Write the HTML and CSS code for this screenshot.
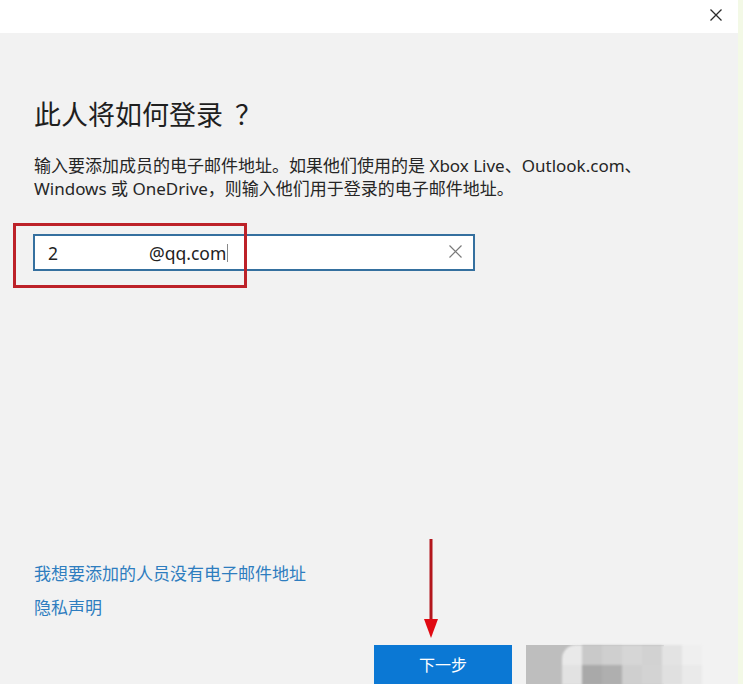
FILE: index.html
```html
<!DOCTYPE html>
<html lang="zh-CN">
<head>
  <meta charset="UTF-8">
  <meta name="viewport" content="width=device-width, initial-scale=1.0">
  <title>添加成员</title>
  <link rel="stylesheet" href="styles.css">
</head>
<body>

<div class="window">
  <header class="titlebar">
    <button class="close-btn" aria-label="关闭">
      <svg width="12" height="12" viewBox="0 0 12 12"><path d="M0.5 0.5 L11.5 11.5 M11.5 0.5 L0.5 11.5" stroke="#2b2b2b" stroke-width="1.3" fill="none"/></svg>
    </button>
  </header>

  <main class="dialog">
    <h1 class="dialog-title">此人将如何登录<span class="qmark">？</span></h1>
    <p class="dialog-text">输入要添加成员的电子邮件地址。如果他们使用的是 Xbox Live、Outlook.com、<br>Windows 或 OneDrive，则输入他们用于登录的电子邮件地址。</p>

    <!-- email field with the red annotation box -->
    <div class="field">
      <div class="email-input">
        <span>2</span><span class="email-hidden"></span><span>@qq.com</span><span class="caret"></span>
      </div>
      <svg class="clear-icon" width="13" height="13" viewBox="0 0 13 13"><path d="M0.5 0.5 L12.5 12.5 M12.5 0.5 L0.5 12.5" stroke="#7a7a7a" stroke-width="1.2" fill="none"/></svg>
      <div class="highlight-box"></div>
    </div>

    <div class="dialog-footer">
      <a class="link" href="#">我想要添加的人员没有电子邮件地址</a>
      <a class="link" href="#">隐私声明</a>

      <div class="buttons">
        <svg class="arrow" width="16" height="100" viewBox="0 0 16 100">
          <line x1="8" y1="0" x2="8" y2="82" stroke="#b3161c" stroke-width="3"/>
          <polygon points="1,80 15,80 8,99" fill="#e00a12"/>
        </svg>
        <button class="btn-primary">下一步</button>
        <div class="btn-masked">
          <div class="mosaic">
            <span style="background:#e9e9e9"></span><span style="background:#c9c9c9"></span><span style="background:#cfcfcf"></span><span style="background:#d6d6d6"></span><span style="background:#d2d2d2"></span><span style="background:#e3e3e3"></span><span style="background:#efefef"></span>
            <span style="background:#e2e2e2"></span><span style="background:#a9a9a9"></span><span style="background:#afafaf"></span><span style="background:#cfcfcf"></span><span style="background:#d3d3d3"></span><span style="background:#e0e0e0"></span><span style="background:#eaeaea"></span>
          </div>
        </div>
      </div>
    </div>
  </main>
</div>

</body>
</html>
```

FILE: styles.css
```css
html, body {
  margin: 0;
  padding: 0;
}

body {
  font-family: "Noto Sans", "Noto Sans CJK SC", sans-serif;
  background-color: #f2f2f2;
  width: 743px;
  height: 684px;
  overflow: hidden;
}

.window {
  height: 684px;
  display: flex;
  flex-direction: column;
  border-right: 5px solid #f3f9e6;
  box-sizing: border-box;
}

.titlebar {
  height: 33px;
  background-color: #fff;
  display: flex;
  justify-content: flex-end;
  align-items: flex-start;
}

.close-btn {
  border: 0;
  background: none;
  padding: 0;
  margin: 9px 16px 0 0;
  width: 12px;
  height: 12px;
  line-height: 0;
}

.dialog {
  flex: 1;
  display: flex;
  flex-direction: column;
  padding: 0 0 0 34px;
}

.dialog-title {
  font-family: "Noto Sans CJK SC", sans-serif;
  font-size: 27px;
  font-weight: 400;
  line-height: 36px;
  color: #1f1f1f;
  margin: 63px 0 0 0;
}

.qmark {
  margin-left: 12px;
}

.dialog-text {
  font-size: 17px;
  line-height: 23px;
  color: #262626;
  margin: 22px 0 0 0;
  white-space: nowrap;
}

.field {
  position: relative;
  margin: 34px 0 0 -1px;
  width: 442px;
}

.email-input {
  height: 33px;
  border: 2px solid #35709f;
  background-color: #fff;
  display: flex;
  align-items: center;
  padding-left: 13px;
  font-size: 17.5px;
  color: #222;
}

.email-hidden {
  width: 91px;
}

.caret {
  width: 1px;
  height: 18px;
  background-color: #888;
  margin-left: 1px;
}

.clear-icon {
  position: absolute;
  right: 13px;
  top: 11px;
}

.highlight-box {
  position: absolute;
  left: -20px;
  top: -11px;
  width: 228px;
  height: 59px;
  border: 3px solid #bd2229;
}

.dialog-footer {
  margin-top: auto;
  display: flex;
  flex-direction: column;
}

.link {
  font-size: 17px;
  line-height: 23px;
  color: #2e7dbf;
  text-decoration: none;
  align-self: flex-start;
  margin-bottom: 11px;
}

.buttons {
  position: relative;
  display: flex;
  gap: 14px;
  margin: 15px 0 0 340px;
}

.arrow {
  position: absolute;
  left: 49px;
  top: -106px;
}

.btn-primary {
  width: 138px;
  height: 39px;
  border: 0;
  background-color: #0b78d4;
  color: #fff;
  font-family: "Noto Sans CJK SC", sans-serif;
  font-size: 16px;
  padding: 0 0 2px 0;
}

.btn-masked {
  position: relative;
  width: 138px;
  height: 39px;
  background-color: #bebebe;
}

.mosaic {
  position: absolute;
  left: 36px;
  top: 0;
  display: grid;
  grid-template-columns: repeat(7, 20px);
  grid-auto-rows: 20px;
  filter: blur(1px);
}

.mosaic span:first-child {
  border-top-left-radius: 14px;
}
```
